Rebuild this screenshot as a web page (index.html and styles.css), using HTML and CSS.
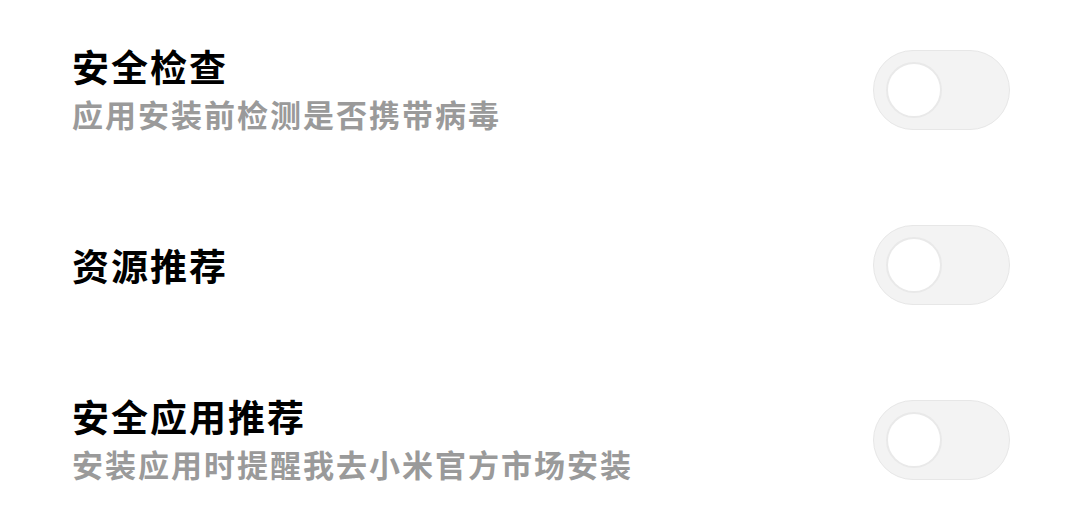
FILE: index.html
```html
<!DOCTYPE html>
<html lang="zh-CN">
<head>
<meta charset="utf-8">
<link rel="stylesheet" href="styles.css">
</head>
<body>
<div class="list">
  <div class="row">
    <div class="text">
      <div class="title">安全检查</div>
      <div class="sub">应用安装前检测是否携带病毒</div>
    </div>
    <div class="toggle"><div class="knob"></div></div>
  </div>
  <div class="row">
    <div class="text">
      <div class="title">资源推荐</div>
    </div>
    <div class="toggle"><div class="knob"></div></div>
  </div>
  <div class="row">
    <div class="text">
      <div class="title">安全应用推荐</div>
      <div class="sub">安装应用时提醒我去小米官方市场安装</div>
    </div>
    <div class="toggle"><div class="knob"></div></div>
  </div>
</div>
</body>
</html>
```

FILE: styles.css
```css
html, body {
  margin: 0;
  padding: 0;
  background: #ffffff;
}
body {
  width: 1080px;
  height: 513px;
  overflow: hidden;
  font-family: "Noto Sans CJK SC", "Noto Sans", sans-serif;
}
.list {
  display: flex;
  flex-direction: column;
  padding-top: 2px;
}
.row {
  height: 175px;
  display: flex;
  align-items: center;
  justify-content: space-between;
  padding: 0 70px 0 72px;
}
.text {
  display: flex;
  flex-direction: column;
}
.title {
  font-size: 37px;
  line-height: 48px;
  font-weight: 700;
  color: #000000;
  letter-spacing: 2px;
}
.sub {
  font-size: 31px;
  line-height: 48px;
  font-weight: 700;
  color: #9a9a9a;
  letter-spacing: 2px;
}
.toggle {
  box-sizing: border-box;
  width: 137px;
  height: 80px;
  border-radius: 40px;
  background: #f3f3f3;
  border: 1px solid #e7e7e7;
  display: flex;
  align-items: center;
  padding-left: 12px;
}
.knob {
  box-sizing: border-box;
  width: 56px;
  height: 56px;
  border-radius: 50%;
  background: #ffffff;
  border: 2px solid #e9e9e9;
}
```
